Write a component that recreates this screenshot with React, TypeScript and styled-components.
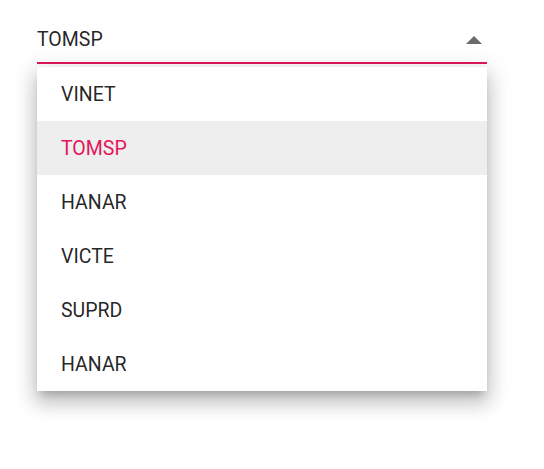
import styled, { createGlobalStyle } from 'styled-components';

const GlobalStyle = createGlobalStyle`
  body {
    margin: 0;
    background: #ffffff;
    font-family: Roboto, "Liberation Sans", sans-serif;
  }
`;

const customers = ['VINET', 'TOMSP', 'HANAR', 'VICTE', 'SUPRD', 'HANAR'];
const selectedIndex = 1;

function App() {
  return (
    <>
      <GlobalStyle />
      <Page>
        <DropDown>
          <InputBox>
            <InputText>TOMSP</InputText>
            <ArrowIcon width="16" height="8" viewBox="0 0 16 8">
              <polygon points="0,8 8,0 16,8" fill="#6b6b6b" />
            </ArrowIcon>
          </InputBox>
          <Popup>
            {customers.map((name, i) => (
              <Item key={i} $active={i === selectedIndex}>
                {name}
              </Item>
            ))}
          </Popup>
        </DropDown>
      </Page>
    </>
  );
}

export default App;

const Page = styled.div`
  padding: 28px 57px 0 37px;
  height: 469px;
  box-sizing: border-box;
`;

const DropDown = styled.div`
  position: relative;
  width: 450px;
`;

const InputBox = styled.div`
  display: flex;
  align-items: flex-start;
  justify-content: space-between;
  height: 34px;
  border-bottom: 2px solid #e0185c;
`;

const InputText = styled.span`
  font-size: 19.5px;
  line-height: 24px;
  color: rgba(0, 0, 0, 0.87);
`;

const ArrowIcon = styled.svg`
  margin-top: 8px;
  margin-right: 5px;
  display: block;
`;

const Popup = styled.ul`
  position: absolute;
  top: calc(100% + 3px);
  left: 0;
  right: 0;
  margin: 0;
  padding: 0;
  list-style: none;
  background: #ffffff;
  box-shadow: 0 7px 8px -4px rgba(0, 0, 0, 0.2), 0 12px 17px 2px rgba(0, 0, 0, 0.14),
    0 5px 22px 4px rgba(0, 0, 0, 0.12);
`;

const Item = styled.li<{ $active: boolean }>`
  height: 54px;
  display: flex;
  align-items: center;
  padding-left: 24px;
  font-size: 19.5px;
  color: ${(p) => (p.$active ? '#e3165b' : 'rgba(0, 0, 0, 0.87)')};
  background: ${(p) => (p.$active ? '#eeeeee' : 'transparent')};
`;
